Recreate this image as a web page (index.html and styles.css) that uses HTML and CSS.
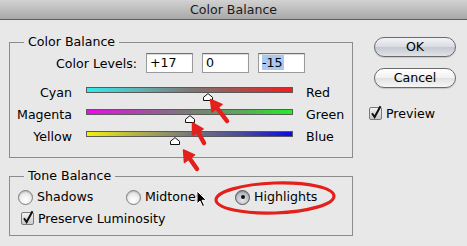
FILE: index.html
```html
<!DOCTYPE html>
<html>
<head>
<meta charset="utf-8">
<link rel="stylesheet" href="styles.css">
</head>
<body>
<div class="titlebar">Color Balance</div>
<div class="main">
  <div class="left">
    <div class="group group-color">
      <div class="group-title">Color Balance</div>
      <div class="levels">
        <span class="levels-label">Color Levels:</span>
        <span class="field">+17</span>
        <span class="field">0</span>
        <span class="field"><span class="sel">-15</span></span>
      </div>
      <div class="slider-row">
        <span class="s-left">Cyan</span>
        <div class="track track-cr"><svg class="thumb" style="left:116px" width="10" height="8" viewBox="0 0 10 8"><path d="M0.5 7.5 V4.3 L5 0.6 L9.5 4.3 V7.5 Z" fill="#fff" stroke="#111" stroke-width="1"/></svg></div>
        <span class="s-right">Red</span>
      </div>
      <div class="slider-row">
        <span class="s-left">Magenta</span>
        <div class="track track-mg"><svg class="thumb" style="left:98px" width="10" height="8" viewBox="0 0 10 8"><path d="M0.5 7.5 V4.3 L5 0.6 L9.5 4.3 V7.5 Z" fill="#fff" stroke="#111" stroke-width="1"/></svg></div>
        <span class="s-right">Green</span>
      </div>
      <div class="slider-row">
        <span class="s-left">Yellow</span>
        <div class="track track-yb"><svg class="thumb" style="left:83px" width="10" height="8" viewBox="0 0 10 8"><path d="M0.5 7.5 V4.3 L5 0.6 L9.5 4.3 V7.5 Z" fill="#fff" stroke="#111" stroke-width="1"/></svg></div>
        <span class="s-right">Blue</span>
      </div>
    </div>
    <div class="group group-tone">
      <div class="group-title">Tone Balance</div>
      <div class="radio-row">
        <span class="radio-item w1"><span class="radio"></span><span class="rlabel">Shadows</span></span>
        <span class="radio-item w2"><span class="radio"></span><span class="rlabel">Midtones</span></span>
        <span class="radio-item"><span class="radio on"></span><span class="rlabel">Highlights</span></span>
      </div>
      <div class="check-row">
        <svg class="check" width="15" height="16" viewBox="0 0 15 16"><rect x="0.5" y="2.5" width="12" height="12" rx="1.5" fill="url(#cbg)" stroke="#7a7a7a"/><defs><linearGradient id="cbg" x1="0" y1="0" x2="0" y2="1"><stop offset="0" stop-color="#f4f4f4"/><stop offset="1" stop-color="#c8c8c8"/></linearGradient></defs><path d="M3 8.3 L5.6 12 L11.5 1.2" fill="none" stroke="#111" stroke-width="2"/></svg>
        <span class="clabel">Preserve Luminosity</span>
      </div>
    </div>
  </div>
  <div class="right">
    <div class="btn btn-ok">OK</div>
    <div class="btn btn-cancel">Cancel</div>
    <div class="preview">
      <svg class="check" width="15" height="16" viewBox="0 0 15 16"><rect x="0.5" y="2.5" width="12" height="12" rx="1.5" fill="url(#cbg2)" stroke="#7a7a7a"/><defs><linearGradient id="cbg2" x1="0" y1="0" x2="0" y2="1"><stop offset="0" stop-color="#f4f4f4"/><stop offset="1" stop-color="#c8c8c8"/></linearGradient></defs><path d="M3 8.3 L5.6 12 L11.5 1.2" fill="none" stroke="#111" stroke-width="2"/></svg>
      <span class="clabel">Preview</span>
    </div>
  </div>
</div>
<svg class="annot" width="467" height="246" viewBox="0 0 467 246">
  <g fill="#e3201b" stroke="#e3201b" stroke-linecap="round" stroke-linejoin="round">
    <line x1="227" y1="121" x2="217" y2="108" stroke-width="4.5"/>
    <polygon points="210.5,99.5 222,104.5 212,112" stroke-width="1.5"/>
    <line x1="204" y1="143" x2="198" y2="132" stroke-width="4.5"/>
    <polygon points="192.5,123 203,129 192.5,135" stroke-width="1.5"/>
    <line x1="197" y1="169" x2="190" y2="159" stroke-width="4.5"/>
    <polygon points="183.5,150 194.5,155 184.5,162.5" stroke-width="1.5"/>
  </g>
  <ellipse cx="275" cy="198" rx="59" ry="15" fill="none" stroke="#e3201b" stroke-width="3.2" transform="rotate(-2 275 198)"/>
  <path d="M197 191 L197 204 L200 201 L202.5 206.5 L204.5 205.6 L202 200.3 L206.3 200.3 Z" fill="#000" stroke="#fff" stroke-width="1" stroke-linejoin="round"/>
</svg>
</body>
</html>
```
FILE: styles.css
```css
html, body {
  margin: 0;
  padding: 0;
}
body {
  width: 467px;
  height: 246px;
  overflow: hidden;
  position: relative;
  background: #e8e8e8;
  font-family: "DejaVu Sans", "Liberation Sans", sans-serif;
  font-size: 12.6px;
  color: #000;
}
.titlebar {
  height: 19px;
  line-height: 19px;
  text-align: center;
  background: linear-gradient(#d2d2d2, #b9b9b9 60%, #a9a9a9);
  border-bottom: 1px solid #5e5e5e;
  color: #1a1a1a;
}
.main {
  display: flex;
  padding-left: 9px;
}
.left {
  width: 344px;
}
.group {
  border: 1px solid #8c8c8c;
}
.group-color {
  margin-top: 22px;
  padding-bottom: 7px;
}
.group-tone {
  margin-top: 18px;
  padding-bottom: 8px;
}
.group-title {
  width: fit-content;
  margin: -9px 0 0 14px;
  padding: 0 4px;
  line-height: 16px;
  height: 16px;
  background: #e8e8e8;
}
.levels {
  display: flex;
  align-items: center;
  margin-top: 3px;
  height: 20px;
}
.levels-label {
  width: 127px;
  text-align: right;
  margin-right: 9px;
}
.field {
  box-sizing: border-box;
  width: 47px;
  height: 20px;
  margin-right: 9px;
  background: #fff;
  border: 1px solid #9a9a9a;
  border-top-color: #6f6f6f;
  box-shadow: inset 0 1px 1px rgba(0,0,0,0.15);
  padding: 0 3px;
  line-height: 18px;
}
.sel {
  background: #a9c9f2;
  display: inline-block;
  line-height: 15px;
  padding: 0 1px 0 0;
}
.slider-row {
  display: flex;
  height: 22px;
}
.levels + .slider-row {
  margin-top: 11px;
}
.s-left {
  width: 62px;
  text-align: right;
  line-height: 16px;
  padding-top: 1px;
}
.s-right {
  margin-left: 13px;
  line-height: 16px;
  padding-top: 1px;
}
.track {
  position: relative;
  box-sizing: border-box;
  width: 207px;
  height: 6px;
  margin-left: 14px;
  margin-top: 3px;
  border: 1px solid #5a5a5a;
}
.track-cr {
  background: linear-gradient(to right, #2fecec, #5fb4b4 25%, #7a7a7a 49%, #a85050 72%, #f81a1a);
}
.track-mg {
  background: linear-gradient(to right, #e80ce8, #b040b0 22%, #7a7a7a 49%, #5aa85a 75%, #1ef01e);
}
.track-yb {
  background: linear-gradient(to right, #f2f20a, #b8b840 22%, #7a7a7a 49%, #4a4a9a 75%, #0a0ae8);
}
.thumb {
  position: absolute;
  top: 5px;
}
.radio-row {
  display: flex;
  align-items: center;
  height: 16px;
  margin-top: 5px;
  padding-left: 8px;
}
.radio-item {
  display: flex;
  align-items: center;
}
.w1 { width: 108px; }
.w2 { width: 109px; }
.radio {
  box-sizing: border-box;
  width: 15px;
  height: 15px;
  border-radius: 50%;
  border: 1px solid #7c7c7c;
  background: radial-gradient(circle at 50% 70%, #ffffff 0%, #f2f2f2 40%, #d0d0d0 100%);
  box-shadow: inset 0 1px 1px rgba(0,0,0,0.15);
  position: relative;
}
.radio.on {
  background: radial-gradient(circle at 50% 70%, #e6e8ec 0%, #b8bcc4 60%, #8c9098 100%);
  border-color: #555;
}
.radio.on::after {
  content: "";
  position: absolute;
  left: 4.5px;
  top: 4.5px;
  width: 4px;
  height: 4px;
  border-radius: 50%;
  background: #111;
}
.rlabel {
  margin-left: 4px;
  line-height: 16px;
}
.check-row {
  display: flex;
  align-items: center;
  margin-top: 6px;
  height: 16px;
  padding-left: 11px;
}
.check {
  display: block;
  margin-top: -3px;
}
.clabel {
  margin-left: 2px;
  line-height: 16px;
}
.right {
  margin-left: 21px;
  padding-top: 17px;
  width: 82px;
}
.btn {
  box-sizing: border-box;
  width: 82px;
  height: 20px;
  border-radius: 10px;
  border: 1px solid #6a6a6a;
  text-align: center;
  line-height: 18px;
  box-shadow: 0 1px 1px rgba(0,0,0,0.15);
}
.btn-ok {
  background: linear-gradient(#f2f3f5, #d9dce2 48%, #c5c9d0 52%, #e0e3e8);
}
.btn-cancel {
  margin-top: 11px;
  background: linear-gradient(#ffffff, #f2f2f2 48%, #e2e2e2 52%, #f7f7f7);
}
.preview {
  display: flex;
  align-items: center;
  margin-top: 18px;
  margin-left: -5px;
  height: 16px;
}
.annot {
  position: absolute;
  left: 0;
  top: 0;
  pointer-events: none;
}
```
